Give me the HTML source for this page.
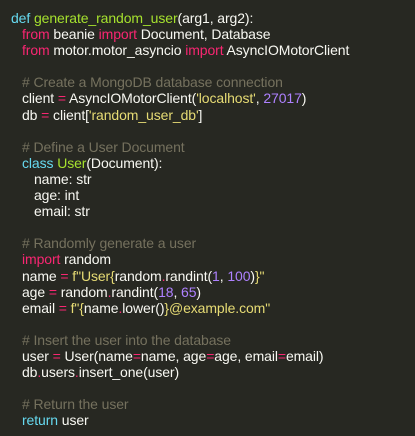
<!DOCTYPE html>
<html><head><meta charset="utf-8"><style>
html,body{margin:0;padding:0;background:#272822;width:415px;height:436px;overflow:hidden}
#c{position:absolute;left:11px;top:10px;font-family:"Liberation Sans",sans-serif;font-size:14px;color:#f8f8f2;letter-spacing:-0.1px}
#c div{height:16.1px;line-height:16px;white-space:pre}
.k{color:#f92672}.d{color:#66d9ef}.f{color:#a6e22e}.s{color:#e6db74}.n{color:#ae81ff}.c{color:#75715e}
.i1{padding-left:11px}.i2{padding-left:23px}
</style></head><body><div id="c"><div><span class="d">def</span> <span class="f">generate_random_user</span>(arg1, arg2):</div><div class="i1"><span class="k">from</span> beanie <span class="k">import</span> Document, Database</div><div class="i1"><span class="k">from</span> motor.motor_asyncio <span class="k">import</span> AsyncIOMotorClient</div><div></div><div class="i1 c"># Create a MongoDB database connection</div><div class="i1">client <span class="k">=</span> AsyncIOMotorClient(<span class="s">'localhost'</span>, <span class="n">27017</span>)</div><div class="i1">db <span class="k">=</span> client[<span class="s">'random_user_db'</span>]</div><div></div><div class="i1 c"># Define a User Document</div><div class="i1"><span class="d">class</span> <span class="f">User</span>(Document):</div><div class="i2">name: str</div><div class="i2">age: int</div><div class="i2">email: str</div><div></div><div class="i1 c"># Randomly generate a user</div><div class="i1"><span class="k">import</span> random</div><div class="i1">name <span class="k">=</span> <span class="s">f"User{</span>random<span class="k">.</span>randint(<span class="n">1</span>, <span class="n">100</span>)<span class="s">}"</span></div><div class="i1">age <span class="k">=</span> random<span class="k">.</span>randint(<span class="n">18</span>, <span class="n">65</span>)</div><div class="i1">email <span class="k">=</span> <span class="s">f"{</span>name<span class="k">.</span>lower()<span class="s">}@example.com"</span></div><div></div><div class="i1 c"># Insert the user into the database</div><div class="i1">user <span class="k">=</span> User(name<span class="k">=</span>name, age<span class="k">=</span>age, email<span class="k">=</span>email)</div><div class="i1">db<span class="k">.</span>users<span class="k">.</span>insert_one(user)</div><div></div><div class="i1 c"># Return the user</div><div class="i1"><span class="d">return</span> user</div></div></body></html>
